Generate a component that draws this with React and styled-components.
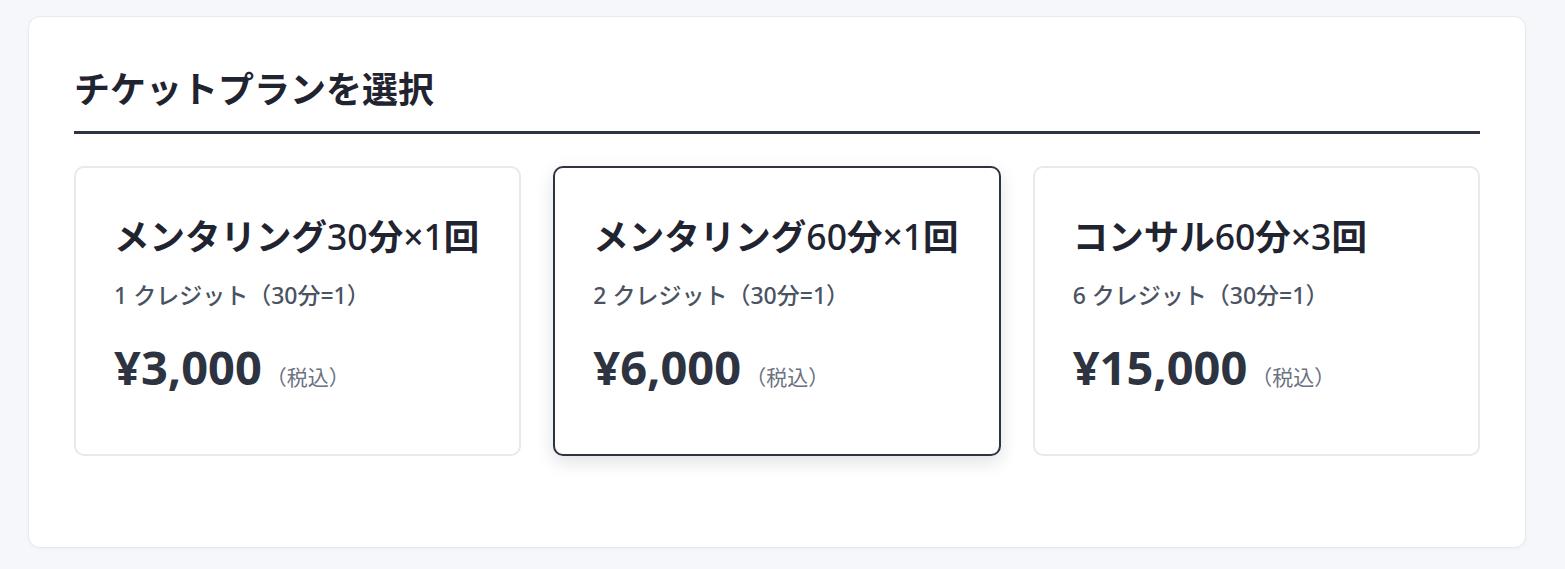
import React from 'react'
import styled, { createGlobalStyle } from 'styled-components'

const GlobalStyle = createGlobalStyle`
  html, body {
    margin: 0;
    padding: 0;
    background: #f6f7fa;
  }
  body {
    font-family: "Noto Sans", "Noto Sans CJK JP", sans-serif;
    color: #1f2430;
  }
`

const plans = [
  { title: 'メンタリング30分×1回', credits: 1, price: '¥3,000' },
  { title: 'メンタリング60分×1回', credits: 2, price: '¥6,000', selected: true },
  { title: 'コンサル60分×3回', credits: 6, price: '¥15,000' },
]

const Page = styled.div`
  padding: 16px 39px 22px 28px;
`

const Panel = styled.section`
  background: #fff;
  border: 1px solid #e6e9ef;
  border-radius: 12px;
  box-shadow: 0 1px 3px rgba(15, 23, 42, 0.04);
  padding: 48px 45px 91px;
`

const Heading = styled.h2`
  margin: 0 0 32px;
  padding-bottom: 16px;
  border-bottom: 3px solid #2d3340;
  font-size: 36px;
  line-height: 1.4;
  font-weight: 700;
  color: #1f2430;
`

const Grid = styled.div`
  display: grid;
  grid-template-columns: repeat(3, minmax(0, 1fr));
  gap: 32px;
`

const Card = styled.button`
  all: unset;
  box-sizing: border-box;
  height: 290px;
  padding: 44px 38px 0;
  border: 2px solid ${p => (p.$selected ? '#2d3340' : '#e6e9ef')};
  border-radius: 10px;
  background: #fff;
  box-shadow: ${p => (p.$selected ? '0 6px 18px rgba(15, 23, 42, 0.13)' : 'none')};
  cursor: pointer;
  display: flex;
  flex-direction: column;
  font-family: inherit;
`

const PlanTitle = styled.div`
  font-size: 35.5px;
  line-height: 1.4;
  font-weight: 700;
  color: #1f2430;
  white-space: nowrap;
`

// latin runs in the plan name are drawn lighter than the kana
const Latin = styled.span`
  font-weight: 500;
`

const Credits = styled.div`
  margin-top: 16px;
  font-size: 23px;
  line-height: 1.5;
  font-weight: 500;
  color: #4b5362;
`

const PriceRow = styled.div`
  margin-top: 24px;
  display: flex;
  align-items: baseline;
`

const Price = styled.span`
  font-size: 47px;
  line-height: 1.3;
  font-weight: 700;
  color: #2d3340;
`

const Tax = styled.span`
  margin-left: 4px;
  font-size: 21px;
  font-weight: 400;
  color: #6b7280;
`

const splitTitle = title =>
  title.split(/([0-9×]+)/).filter(Boolean).map((part, i) =>
    /[0-9×]/.test(part) ? <Latin key={i}>{part}</Latin> : part
  )

export default function App() {
  return (
    <>
      <GlobalStyle />
      <Page>
        <Panel>
          <Heading>チケットプランを選択</Heading>
          <Grid>
            {plans.map(plan => (
              <Card key={plan.title} $selected={plan.selected}>
                <PlanTitle>{splitTitle(plan.title)}</PlanTitle>
                <Credits>{plan.credits} クレジット（30分=1）</Credits>
                <PriceRow>
                  <Price>{plan.price}</Price>
                  <Tax>（税込）</Tax>
                </PriceRow>
              </Card>
            ))}
          </Grid>
        </Panel>
      </Page>
    </>
  )
}
